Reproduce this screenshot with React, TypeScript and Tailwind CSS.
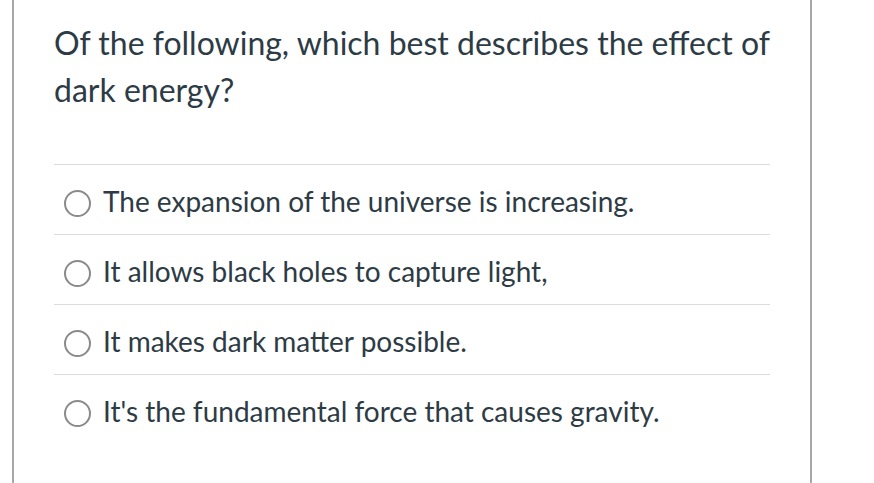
const options = [
  "The expansion of the universe is increasing.",
  "It allows black holes to capture light,",
  "It makes dark matter possible.",
  "It's the fundamental force that causes gravity.",
];

export default function App() {
  return (
    <div className="h-[483px] w-[874px] bg-white overflow-hidden font-['Lato',sans-serif] text-[#2d3b45]">
      <div className="ml-[12px] w-[800px] h-full border-x-2 border-[#a8a8a8] px-[40px] pt-[19px]">
        <p className="text-[32px] leading-[47px]">
          Of the following, which best describes the effect of dark energy?
        </p>
        <div className="mt-[51px] border-t border-[#dcdcdc]">
          {options.map((opt, i) => (
            <label
              key={i}
              className={`flex items-center h-[70px] pl-[10px] gap-[12px] ${i < options.length - 1 ? "border-b border-[#dcdcdc]" : ""}`}
            >
              <span className="w-[27px] h-[27px] rounded-full border-2 border-[#8a8a8a] shrink-0 mt-[7px]" />
              <span className="text-[28px] leading-[32px] mt-[2px]">{opt}</span>
            </label>
          ))}
        </div>
      </div>
    </div>
  );
}
